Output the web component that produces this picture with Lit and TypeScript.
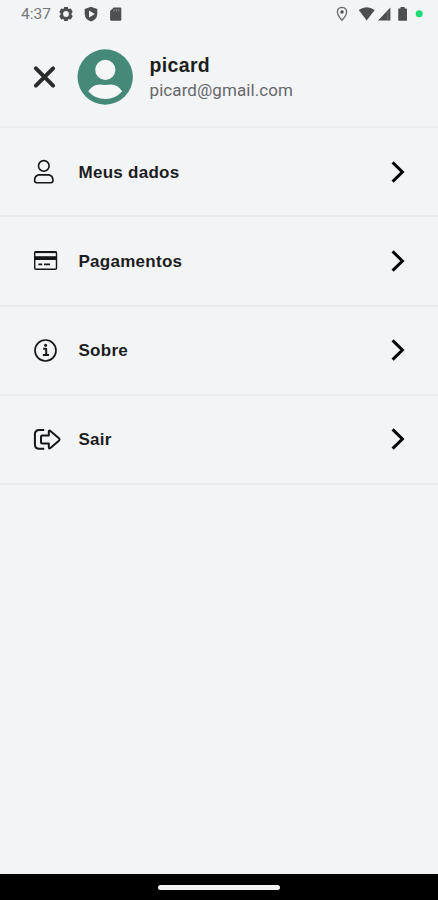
import { LitElement, html, css, svg } from "lit";
import { customElement, property } from "lit/decorators.js";

const icons: Record<string, unknown> = {
  user: svg`<circle cx="11.8" cy="9.9" r="5.3"/><path d="M6.8 18.9H16.6Q21 19.6 21 24.6Q21 26.7 18.8 26.7H4.8Q2.6 26.7 2.6 24.6Q2.6 19.6 6.8 18.9Z"/>`,
  card: svg`<rect x="2.7" y="6.7" width="21.8" height="17.6" rx="1.2" stroke-width="1.4"/><path d="M2.5 7.3H24.5" stroke-width="1.6"/><path d="M2.5 13.1H24.5" stroke-width="3.8"/><path d="M6.4 19.3H10.2M12 19.3H18" stroke-width="1.8"/>`,
  info: svg`<circle cx="13.5" cy="15.5" r="10.5" stroke-width="1.7"/><path d="M11.2 13.7H14.2V19.8M10.9 20H17" stroke-width="1.9"/><circle cx="13.6" cy="10.3" r="1.5" fill="#151617" stroke="none"/>`,
  exit: svg`<path d="M12.2 6.1H7.4Q2.9 6.1 2.9 10.6V20.3Q2.9 24.8 7.4 24.8H12.2" stroke-width="2"/><path d="M10.2 11.6H16.8V8.1Q16.8 5.7 18.7 7.2L27.2 14.6Q28 15.5 27.2 16.4L18.7 23.8Q16.8 25.3 16.8 22.9V19.4H10.2Q9 19.4 9 18.2V12.8Q9 11.6 10.2 11.6Z" stroke-width="2"/>`,
};

@customElement("menu-row")
export class MenuRow extends LitElement {
  @property() label = "";
  @property() icon = "user";
  static styles = css`
    :host { display: block; }
    .row { height: 89.25px; box-sizing: border-box; border-bottom: 2px solid #ebecee; display: flex; align-items: center; padding: 0 32px; }
    .icon { width: 30px; height: 31px; fill: none; stroke: #151617; stroke-width: 1.6; stroke-linejoin: round; flex: none; }
    .label { flex: 1; margin-left: 16.5px; padding-top: 2px; font-size: 17px; line-height: 24px; font-weight: 700; color: #1c1d1f; letter-spacing: 0.27px; }
    .chevron { width: 16px; height: 24px; fill: none; stroke: #050505; stroke-width: 3; flex: none; }
  `;
  render() {
    return html`<div class="row">
      <svg class="icon" viewBox="0 0 30 31">${icons[this.icon]}</svg>
      <div class="label">${this.label}</div>
      <svg class="chevron" viewBox="0 0 16 24"><path d="M2.6 2.4L12.4 12L2.6 21.6"/></svg>
    </div>`;
  }
}

@customElement("app-root")
export class AppRoot extends LitElement {
  static styles = css`
    :host { display: flex; flex-direction: column; height: 900px; background: #f3f4f6; font-family: "Liberation Sans", Arial, sans-serif; overflow: hidden; }
    .status { height: 28px; display: flex; align-items: center; padding: 0 15px 0 21px; box-sizing: border-box; flex: none; }
    .time { width: 37px; font-family: Roboto, sans-serif; font-size: 15.5px; line-height: 28px; color: #76777a; }
    .left { width: 66px; height: 28px; fill: #4d4e50; }
    .right { width: 90px; height: 28px; margin-left: auto; fill: #4d4e50; }
    .header { height: 100px; flex: none; box-sizing: border-box; border-bottom: 2px solid #ebecee; display: flex; align-items: center; padding-left: 32px; }
    .close { width: 25px; height: 26px; stroke: #292b2a; stroke-width: 4; stroke-linecap: round; }
    .avatar { width: 56px; height: 56px; margin-left: 20px; }
    .who { margin-left: 16.5px; }
    .name { font-size: 19.5px; line-height: 25px; font-weight: 700; color: #1d1e20; letter-spacing: 0.35px; }
    .mail { font-family: Roboto, sans-serif; font-size: 17px; line-height: 24px; color: #66676a; font-weight: 400; letter-spacing: 0.08px; }
    .space { flex: 1; }
    .nav { height: 26px; flex: none; background: #000; display: flex; align-items: center; justify-content: center; }
    .pill { width: 122px; height: 5px; border-radius: 3px; background: #f2f2f2; }
  `;
  render() {
    return html`
      <div class="status">
        <div class="time">4:37</div>
        <svg class="left" viewBox="58 0 66 28">
          <path d="M64.2 7H67.8L68.4 9.1L70.8 8.6L72.7 11.8L71.2 14L72.7 16.2L70.8 19.4L68.4 18.9L67.8 21H64.2L63.6 18.9L61.2 19.4L59.3 16.2L60.8 14L59.3 11.8L61.2 8.6L63.6 9.1Z"/>
          <circle cx="66" cy="14" r="2.9" fill="#f3f4f6"/>
          <path d="M91 6.7L97.3 9.1V14Q97 19.5 91 21.4Q85 19.5 84.7 14V9.1Z"/>
          <path d="M89 10.5L94.8 14L89 17.4Z" fill="#f3f4f6"/>
          <path d="M113.7 7.4H120Q121.3 7.4 121.3 8.7V19.4Q121.3 20.7 120 20.7H111.4Q110.1 20.7 110.1 19.4V11Z"/>
          <path d="M114 9V11.5M116.4 9V11.5M118.8 9V11.5" stroke="#8b8c8e" stroke-width="1"/>
        </svg>
        <svg class="right" viewBox="333 0 90 28">
          <path d="M342 7.4Q346.6 7.7 346.6 12Q346.6 15.2 342 20.3Q337.4 15.2 337.4 12Q337.4 7.7 342 7.4Z" fill="none" stroke="#66676a" stroke-width="1.3"/>
          <circle cx="342" cy="12" r="1.7"/>
          <path d="M358.7 10.1Q366.7 4.3 374.7 10.1L366.7 20.4Z"/>
          <path d="M378 20.4L390.4 7.5V20.4Z"/><path d="M387.8 10.2V20.4" stroke="#77787a" stroke-width=".8"/>
          <path d="M400.5 7H404.7V8.4H406.3Q407 8.4 407 9.1V20Q407 20.8 406.2 20.8H399Q398.2 20.8 398.2 20V9.1Q398.2 8.4 399 8.4H400.5Z"/>
          <circle cx="419.2" cy="13.8" r="3.5" fill="#1fdc78"/>
        </svg>
      </div>
      <div class="header">
        <svg class="close" viewBox="0 0 25 26"><path d="M3.9 4.4L21.1 21.6M21.1 4.4L3.9 21.6"/></svg>
        <svg class="avatar" viewBox="0 0 56 56"><circle cx="28.2" cy="28" r="27.7" fill="#458a79"/><circle cx="28.3" cy="20.8" r="10.1" fill="#f5f7f7"/><path d="M11.2 42.2Q15.6 36 22.5 35.6Q28.2 36.4 33.9 35.6Q40.8 36 45.2 42.2Q38.4 50 28.2 50Q18 50 11.2 42.2Z" fill="#f5f7f7"/></svg>
        <div class="who"><div class="name">picard</div><div class="mail">picard@gmail.com</div></div>
      </div>
      <menu-row icon="user" label="Meus dados"></menu-row>
      <menu-row icon="card" label="Pagamentos"></menu-row>
      <menu-row icon="info" label="Sobre"></menu-row>
      <menu-row icon="exit" label="Sair"></menu-row>
      <div class="space"></div>
      <div class="nav"><div class="pill"></div></div>
    `;
  }
}
